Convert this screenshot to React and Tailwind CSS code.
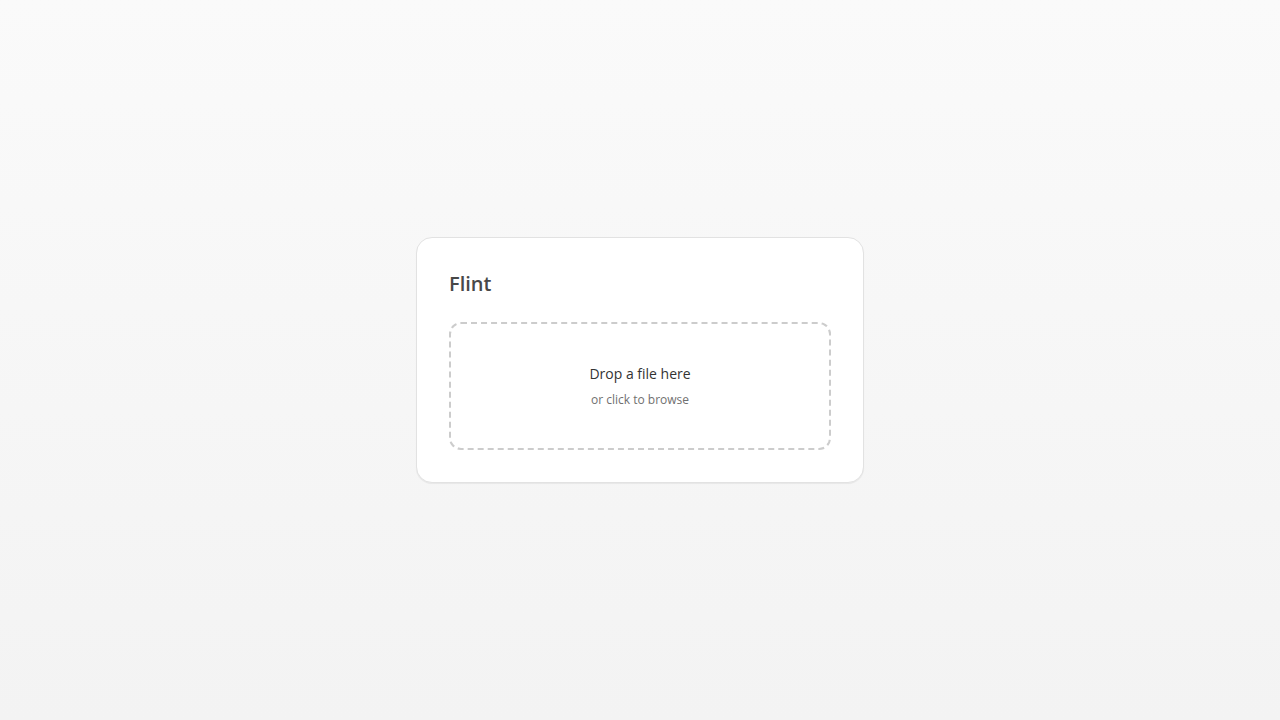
import React from 'react'

function App() {
  return (
    <div
      className="min-h-screen w-full flex items-center justify-center bg-gradient-to-b from-[#fafafa] to-[#f3f3f3]"
      style={{ fontFamily: '"Open Sans", "Noto Sans", sans-serif' }}
    >
      <div className="w-[448px] bg-white rounded-2xl border border-[#e2e2e2] shadow-[0_1px_1px_rgba(0,0,0,0.06)] p-8">
        <h1 className="text-xl leading-7 font-semibold text-[#484848] mb-6">Flint</h1>
        <div className="h-32 rounded-xl border-2 border-dashed border-[#cccccc] flex flex-col items-center justify-center cursor-pointer">
          <p className="text-sm leading-5 text-[#333]">Drop a file here</p>
          <p className="text-xs leading-4 text-[#707070] mt-2">or click to browse</p>
        </div>
      </div>
    </div>
  )
}

export default App
